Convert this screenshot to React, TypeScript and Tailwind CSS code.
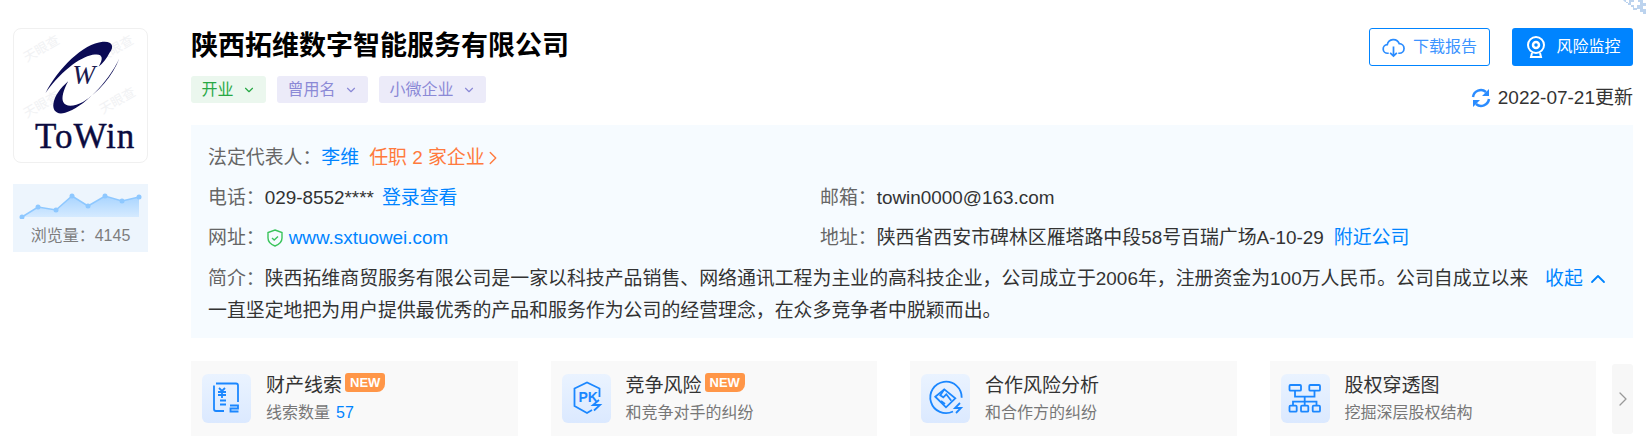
import { ChevronDown, ChevronRight, ChevronUp } from 'lucide-react';

const tags = [
    { label: '开业', box: 'w-[75px] bg-[#ebf7ee] text-[#27a844]', icon: 'text-[#27a844]' },
    { label: '曾用名', box: 'w-[91px] bg-[#ecebf9] text-[#8b89d6]', icon: 'text-[#8b89d6]' },
    { label: '小微企业', box: 'w-[107px] bg-[#ecebf9] text-[#8b89d6]', icon: 'text-[#8b89d6]' },
];

const iconClass = 'h-[49px] w-[49px]';

const ClueIcon = () => (
    <svg viewBox="0 0 49 49" className={iconClass} fill="none" stroke="#1b87ff" strokeWidth="1.800">
        <path d="M14 9.500H34a2 2 0 0 1 2 2V28M12 11.500V35a2 2 0 0 0 2 2H22" />
        <path d="M17 14l3 3 3-3M16 18h8M16 21h8M20 17v7M18 26.500h6M18 30.500h6" />
        <path d="M28 31.500h8v3h-7.500v3h8" />
    </svg>
);

const PkIcon = () => (
    <svg viewBox="0 0 49 49" className={iconClass} fill="none" stroke="#1b87ff" strokeWidth="1.800">
        <path d="M37.500 23V14.500L25 8.500 12.500 14.500V32L25 39l5-3" />
        <text x="16.500" y="28" fontFamily="Liberation Sans, sans-serif" fontSize="14" fontWeight="700" fill="#1b87ff" stroke="none">PK</text>
        <path d="M37 26l-6 5h7l-6 5.500" />
    </svg>
);

const HandIcon = () => (
    <svg viewBox="0 0 49 49" className={iconClass} fill="none" stroke="#1b87ff" strokeWidth="1.800">
        <path d="M32 37.500A15.700 15.700 0 1 1 40.700 23.700" />
        <path d="M14.300 22.700L23.300 15.300 34.300 24.300 25 33.300z" />
        <path d="M23.300 15.300l-4 6 3 2 3-3 5 6.500M20 27l4 3" />
        <path d="M39 29l-5 5h6l-5 5" />
    </svg>
);

const TreeIcon = () => (
    <svg viewBox="0 0 49 49" className={iconClass} fill="none" stroke="#1b87ff" strokeWidth="1.800">
        <rect x="8.500" y="11" width="11.500" height="5.700" rx="1" />
        <rect x="28.300" y="11" width="10.700" height="5.700" rx="1" />
        <rect x="8.500" y="31.700" width="7.200" height="6" rx="1" />
        <rect x="20" y="31.700" width="7.300" height="6" rx="1" />
        <rect x="31.700" y="31.700" width="7.300" height="6" rx="1" />
        <path d="M14 16.700v6h19.500v-6M23.700 22.700v9M12 31.700v-4h23.500v4" />
    </svg>
);

const cards = [
    { title: '财产线索', isNew: true, sub: '线索数量', count: '57', icon: <ClueIcon /> },
    { title: '竞争风险', isNew: true, sub: '和竞争对手的纠纷', icon: <PkIcon /> },
    { title: '合作风险分析', isNew: false, sub: '和合作方的纠纷', icon: <HandIcon /> },
    { title: '股权穿透图', isNew: false, sub: '挖掘深层股权结构', icon: <TreeIcon /> },
];

const Logo = () => (
    <div className="relative h-[135px] w-[135px] overflow-hidden rounded-[8px] border border-[#f0f0f0] bg-white">
        <span className="absolute left-[8px] top-[10px] -rotate-30 text-[13px] text-[#f1f2f4]">天眼查</span>
        <span className="absolute left-[82px] top-[10px] -rotate-30 text-[13px] text-[#f1f2f4]">天眼查</span>
        <span className="absolute left-[8px] top-[66px] -rotate-30 text-[13px] text-[#f1f2f4]">天眼查</span>
        <span className="absolute left-[84px] top-[62px] -rotate-30 text-[13px] text-[#f1f2f4]">天眼查</span>
        <svg viewBox="0 0 135 135" className="absolute inset-0 h-full w-full">
            <path d="M32 65C45 40 70 15 90 13C100 12 102 18 97 24C94 30 90 35 86 38C91 30 90 25 82 26C70 27 50 40 32 65Z" fill="#0b0b55" />
            <path d="M107 30C95 55 70 80 52 85C43 88 39 82 40 76C41 68 47 60 55 53C50 62 48 70 50 74C53 80 62 78 70 74C85 65 100 48 107 30Z" fill="#0b0b55" />
            <text x="59" y="56" fontFamily="Liberation Serif, serif" fontStyle="italic" fontSize="28" fill="#1a1a50">W</text>
        </svg>
        <span className="absolute left-[21px] top-[88px] font-['Liberation_Serif',serif] text-[35px] leading-[40px] tracking-[1px] text-[#0b0b40] [-webkit-text-stroke:0.4px_#0b0b40]">ToWin</span>
    </div>
);

const chartPoints = [[9, 26], [25, 16], [43, 19], [59, 5], [75, 15], [92, 5], [109, 10], [126, 6]];

const ViewChart = () => (
    <svg viewBox="0 0 135 28" className="h-[28px] w-[135px]">
        <defs>
            <linearGradient id="viewFill" x1="0" y1="0" x2="0" y2="1">
                <stop offset="0" stopColor="#a8d4ff" />
                <stop offset="1" stopColor="#d5eaff" />
            </linearGradient>
        </defs>
        <path d="M9 26L25 16 43 19 59 5 75 15 92 5 109 10 126 6V26H9Z" fill="url(#viewFill)" />
        <path d="M9 26L25 16 43 19 59 5 75 15 92 5 109 10 126 6" fill="none" stroke="#8ec8ff" strokeWidth="1.500" />
        {chartPoints.map(([x, y]) => (
            <circle key={x} cx={x} cy={y} r="2.500" fill="#8ec8ff" />
        ))}
    </svg>
);

const Label = ({ children }: { children: string }) => <span className="text-[#666666]">{children}</span>;

export default function App() {
    return (
        <div className="relative flex h-[441px] w-[1646px] overflow-hidden bg-white pl-[13px] pt-[28px] font-['Liberation_Sans','Noto_Sans_CJK_SC',sans-serif] text-[#333333]">
            {/* QR corner */}
            <svg viewBox="0 0 23 18" className="absolute right-0 top-0 h-[18px] w-[23px]">
                <path d="M0 0h3v3H6V0h5v2H8v3h3v3h3V5h3V2h-2V0h5v3h3v3h-3v3h3v5h-3v-2h-3V9h-3v1h-4V7H8V5H5V2H2z" fill="#bcd3ee" />
            </svg>

            {/* Left column */}
            <div className="w-[135px] shrink-0">
                <Logo />
                <div className="mt-[21px] flex h-[68px] flex-col items-center bg-[#edf5fd] pt-[7px]">
                    <ViewChart />
                    <div className="mt-[5px] text-[16px] leading-[24px] text-[#7d7d7d]">浏览量：4145</div>
                </div>
            </div>

            {/* Main column */}
            <div className="ml-[43px] w-[1442px]">
                <div className="flex items-start justify-between">
                    <div>
                        <h1 className="text-[27px] font-bold leading-[36px] text-black">陕西拓维数字智能服务有限公司</h1>
                        <div className="mt-[12px] flex gap-[11px]">
                            {tags.map(tag => (
                                <div key={tag.label} className={`flex h-[27px] items-center justify-center gap-[8px] rounded-[3px] text-[16px] ${tag.box}`}>
                                    {tag.label}
                                    <ChevronDown className={`h-[14px] w-[14px] ${tag.icon}`} />
                                </div>
                            ))}
                        </div>
                    </div>
                    <div className="flex flex-col items-end">
                        <div className="flex gap-[22px]">
                            <button className="flex h-[38px] w-[121px] items-center justify-center gap-[8px] rounded-[3px] border border-[#0084ff] text-[16px] text-[#3d94ff]">
                                <svg viewBox="0 0 24 24" className="h-[23px] w-[23px]" fill="none" stroke="#2a8cff" strokeWidth="1.800">
                                    <path d="M7 18H6a4.500 4.500 0 0 1-.500-9A6.500 6.500 0 0 1 18 8a5 5 0 0 1 0 10h-1" />
                                    <path d="M12 11v10M8.500 17.500L12 21l3.500-3.500" />
                                </svg>
                                下载报告
                            </button>
                            <button className="flex h-[38px] w-[121px] items-center justify-center gap-[8px] rounded-[3px] bg-[#0084ff] text-[16px] text-white">
                                <svg viewBox="0 0 24 24" className="h-[24px] w-[24px]" fill="none" stroke="white">
                                    <circle cx="12" cy="10" r="8" strokeWidth="2" />
                                    <circle cx="12" cy="10" r="3" strokeWidth="2.500" />
                                    <path d="M8 18l-1 4h10l-1-4" strokeWidth="2" />
                                </svg>
                                风险监控
                            </button>
                        </div>
                        <div className="mt-[20px] flex h-[24px] items-center gap-[7px] text-[19px]">
                            <svg viewBox="0 0 20 20" className="h-[20px] w-[20px]" fill="none" stroke="#2a8cff" strokeWidth="2.500">
                                <path d="M2 9A8 8 0 0 1 15 4M18 11A8 8 0 0 1 5 16" />
                                <path d="M18 1v7h-7zM2 19v-7h7z" fill="#2a8cff" stroke="none" />
                            </svg>
                            2022-07-21更新
                        </div>
                    </div>
                </div>

                {/* Info panel */}
                <div className="mt-[15px] h-[213px] bg-[#f6fbff] px-[17px] pt-[20px] text-[18.900px] leading-[26px]">
                    <div>
                        <Label>法定代表人：</Label>
                        <span className="text-[#0084ff]">李维</span>
                        <span className="ml-[10px] text-[#ff7a3d]">任职 2 家企业</span>
                        <ChevronRight className="inline h-[22px] w-[22px] -translate-x-[3px] -translate-y-[1px] text-[#ff7a3d]" strokeWidth={1.500} />
                    </div>
                    <div className="mt-[14px] grid grid-cols-[612px_1fr]">
                        <div>
                            <Label>电话：</Label>029-8552****
                            <span className="ml-[8px] text-[#0084ff]">登录查看</span>
                        </div>
                        <div>
                            <Label>邮箱：</Label>towin0000@163.com
                        </div>
                    </div>
                    <div className="mt-[14px] grid grid-cols-[612px_1fr]">
                        <div className="flex items-center">
                            <Label>网址：</Label>
                            <svg viewBox="0 0 20 20" className="h-[20px] w-[20px]" fill="none" stroke="#3bc45c" strokeWidth="1.400">
                                <path d="M10 2l7 2.500V10c0 4-3 6.500-7 8-4-1.500-7-4-7-8V4.500z" />
                                <path d="M7 10l2.200 2L13 8.500" />
                            </svg>
                            <span className="ml-[4px] text-[#0084ff]">www.sxtuowei.com</span>
                        </div>
                        <div>
                            <Label>地址：</Label>陕西省西安市碑林区雁塔路中段58号百瑞广场A-10-29
                            <span className="ml-[10px] text-[#0084ff]">附近公司</span>
                        </div>
                    </div>
                    <div className="relative mt-[12px] leading-[32px]">
                        <Label>简介：</Label>陕西拓维商贸服务有限公司是一家以科技产品销售、网络通讯工程为主业的高科技企业，公司成立于2006年，注册资金为100万人民币。公司自成立以来
                        <br />
                        一直坚定地把为用户提供最优秀的产品和服务作为公司的经营理念，在众多竞争者中脱颖而出。
                        <span className="absolute left-[1337px] top-0 flex items-center text-[#0084ff]">
                            收起
                            <ChevronUp className="ml-[3px] h-[24px] w-[24px]" strokeWidth={1.800} />
                        </span>
                    </div>
                </div>

                {/* Feature cards */}
                <div className="mt-[23px] flex">
                    <div className="flex gap-[33px]">
                        {cards.map(card => (
                            <div key={card.title} className="flex h-[75px] w-[326.500px] items-start bg-[#f9f9f9] pl-[11px] pt-[13px]">
                                <div className="flex h-[49px] w-[49px] items-center justify-center rounded-[6px] bg-gradient-to-b from-[#eaf3ff] to-[#dbe9ff]">
                                    {card.icon}
                                </div>
                                <div className="ml-[15px]">
                                    <div className="flex h-[24px] items-center text-[19px] leading-[24px]">
                                        {card.title}
                                        {card.isNew && (
                                            <span className="mb-[7px] ml-[3px] rounded-tl-[3px] rounded-tr-[3px] rounded-br-[8px] rounded-bl-[3px] bg-[#ff9648] px-[5px] text-[13px] font-bold leading-[19px] text-white">NEW</span>
                                        )}
                                    </div>
                                    <div className="mt-[3px] text-[16px] leading-[24px] text-[#777777]">
                                        {card.sub}
                                        {card.count && <span className="ml-[6px] text-[#0084ff]">{card.count}</span>}
                                    </div>
                                </div>
                            </div>
                        ))}
                    </div>
                    <div className="ml-[16px] mt-[3px] flex h-[70px] w-[21px] items-center justify-center rounded-[3px] bg-[#f7f7f7]">
                        <ChevronRight className="h-[24px] w-[24px] shrink-0 text-[#999999]" strokeWidth={1.300} />
                    </div>
                </div>
            </div>
        </div>
    );
}
